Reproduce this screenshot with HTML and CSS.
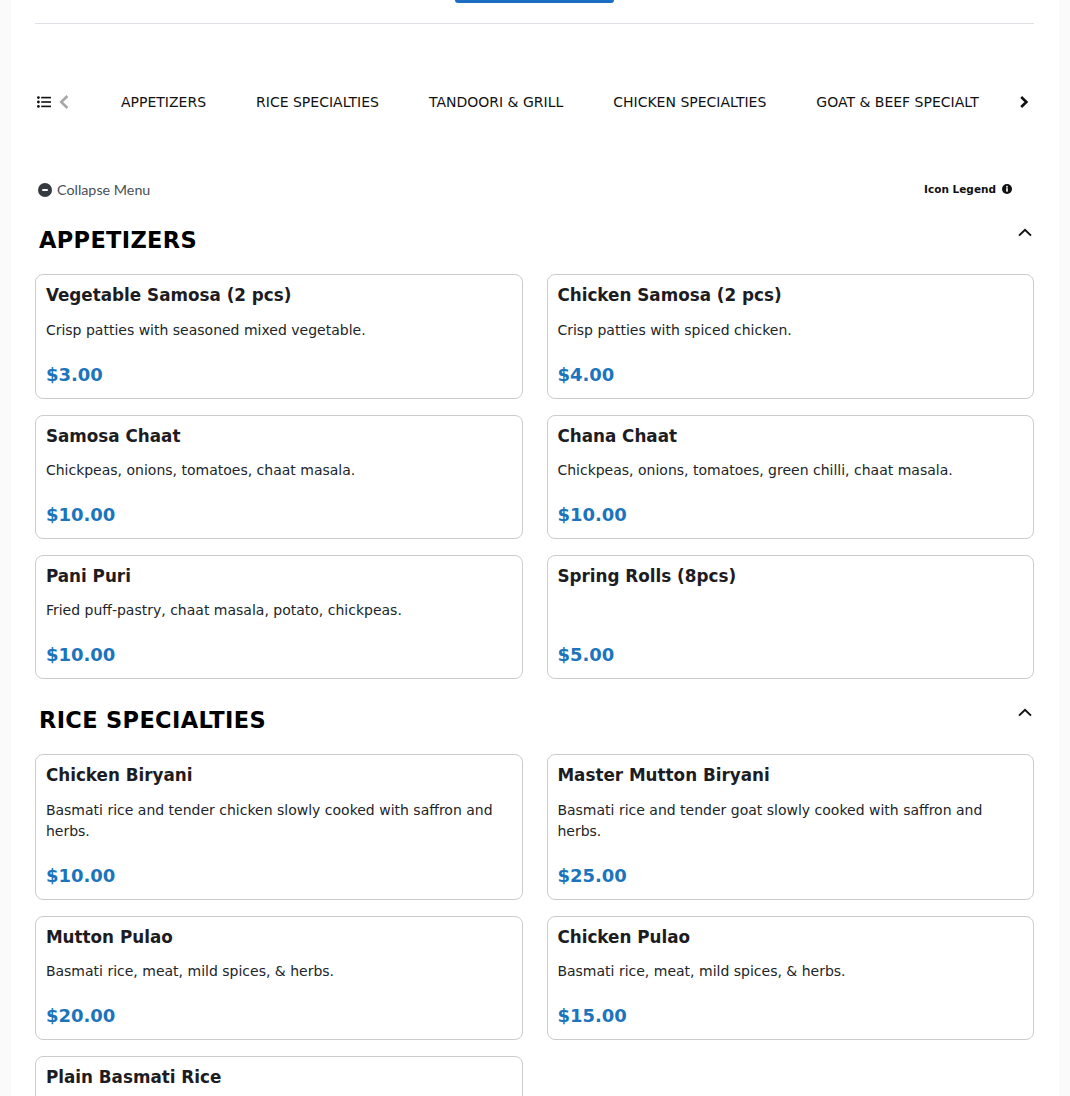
FILE: index.html
```html
<!DOCTYPE html>
<html lang="en">
<head>
<meta charset="utf-8">
<title>Menu</title>
<link rel="stylesheet" href="styles.css">
</head>
<body>
<main class="page">
  <div class="top-bar"><div class="order-button"></div></div>
  <nav class="cat-nav">
    <div class="cat-left">
      <svg class="list-icon" viewBox="0 0 14 12" width="14" height="12"><g fill="#111"><circle cx="1.4" cy="1.6" r="1.4"/><circle cx="1.4" cy="6" r="1.4"/><circle cx="1.4" cy="10.4" r="1.4"/><rect x="4.2" y="0.8" width="9.8" height="1.6"/><rect x="4.2" y="5.2" width="9.8" height="1.6"/><rect x="4.2" y="9.6" width="9.8" height="1.6"/></g></svg>
      <svg class="chev-left" viewBox="0 0 10 14" width="10" height="14"><path d="M8.4 1 2.2 7 8.4 13" fill="none" stroke="#a6a6a6" stroke-width="2.5"/></svg>
    </div>
    <div class="cat-list">
      <span class="cat">APPETIZERS</span>
      <span class="cat">RICE SPECIALTIES</span>
      <span class="cat">TANDOORI &amp; GRILL</span>
      <span class="cat">CHICKEN SPECIALTIES</span>
      <span class="cat">GOAT &amp; BEEF SPECIALT</span>
    </div>
    <svg class="chev-right" viewBox="0 0 10 14" width="10" height="14"><path d="M2.2 2 7.4 7 2.2 12" fill="none" stroke="#111" stroke-width="2.6"/></svg>
  </nav>
  <div class="tools">
    <div class="collapse">
      <svg viewBox="0 0 14 14" width="14" height="14"><circle cx="7" cy="7" r="7" fill="#343a40"/><rect x="4.2" y="6" width="5.6" height="2" rx=".6" fill="#fff"/></svg>
      <span>Collapse Menu</span>
    </div>
    <div class="legend">
      <span>Icon Legend</span>
      <svg viewBox="0 0 12 12" width="10" height="10"><circle cx="6" cy="6" r="6" fill="#111"/><rect x="5" y="5" width="2" height="4.2" fill="#fff"/><circle cx="6" cy="3.3" r="1.1" fill="#fff"/></svg>
    </div>
  </div>

  <section class="section">
    <header class="section-head">
      <h2>APPETIZERS</h2>
      <svg viewBox="0 0 14 9" width="14" height="9"><path d="M1 7.6 7 1.8l6 5.8" fill="none" stroke="#111" stroke-width="2"/></svg>
    </header>
    <div class="grid">
      <article class="card"><h3>Vegetable Samosa (2 pcs)</h3><p class="roomy">Crisp patties with seasoned mixed vegetable.</p><div class="price">$3.00</div></article>
      <article class="card"><h3>Chicken Samosa (2 pcs)</h3><p class="roomy">Crisp patties with spiced chicken.</p><div class="price">$4.00</div></article>
      <article class="card"><h3>Samosa Chaat</h3><p>Chickpeas, onions, tomatoes, chaat masala.</p><div class="price">$10.00</div></article>
      <article class="card"><h3>Chana Chaat</h3><p>Chickpeas, onions, tomatoes, green chilli, chaat masala.</p><div class="price">$10.00</div></article>
      <article class="card"><h3>Pani Puri</h3><p>Fried puff-pastry, chaat masala, potato, chickpeas.</p><div class="price">$10.00</div></article>
      <article class="card"><h3>Spring Rolls (8pcs)</h3><p></p><div class="price">$5.00</div></article>
    </div>
  </section>

  <section class="section">
    <header class="section-head">
      <h2>RICE SPECIALTIES</h2>
      <svg viewBox="0 0 14 9" width="14" height="9"><path d="M1 7.6 7 1.8l6 5.8" fill="none" stroke="#111" stroke-width="2"/></svg>
    </header>
    <div class="grid">
      <article class="card"><h3>Chicken Biryani</h3><p class="roomy">Basmati rice and tender chicken slowly cooked with saffron and herbs.</p><div class="price">$10.00</div></article>
      <article class="card"><h3>Master Mutton Biryani</h3><p class="roomy">Basmati rice and tender goat slowly cooked with saffron and herbs.</p><div class="price">$25.00</div></article>
      <article class="card"><h3>Mutton Pulao</h3><p>Basmati rice, meat, mild spices, &amp; herbs.</p><div class="price">$20.00</div></article>
      <article class="card"><h3>Chicken Pulao</h3><p>Basmati rice, meat, mild spices, &amp; herbs.</p><div class="price">$15.00</div></article>
      <article class="card"><h3>Plain Basmati Rice</h3></article>
    </div>
  </section>
</main>
</body>
</html>
```
FILE: styles.css
```css
* { box-sizing: border-box; }
html, body { margin: 0; padding: 0; height: 1096px; overflow: hidden; }
body { background: #fafafa; font-family: "DejaVu Sans", sans-serif; color: #212529; }
.page { width: 1048px; margin-left: 11px; background: #fff; padding: 0 25px 0 24px; height: 1096px; overflow: hidden; }
.top-bar { height: 24px; border-bottom: 1px solid #dee2e6; display: flex; justify-content: center; }
.order-button { width: 159px; height: 3px; background: #1b6ec2; border-radius: 0 0 4px 4px; }
.cat-nav { display: flex; align-items: center; height: 20px; margin-top: 68px; padding-left: 2px; }
.cat-left { display: flex; align-items: center; gap: 8px; width: 84px; }
.cat-list { display: flex; gap: 50px; width: 900px; overflow: hidden; white-space: nowrap; font-size: 14px; color: #111; }
.cat { flex: none; }
.chev-right { margin-left: -2px; flex: none; }
.tools { display: flex; justify-content: space-between; align-items: center; margin-top: 68px; height: 20px; padding: 0 22px 0 3px; }
.collapse { display: flex; align-items: center; gap: 5px; font-family: "Lato", sans-serif; font-size: 14.3px; color: #495057; }
.collapse span { position: relative; top: -1px; }
.legend { display: flex; align-items: center; gap: 6px; margin-bottom: 2px; font-size: 10.5px; font-weight: 700; color: #111; }
.section-head { display: flex; justify-content: space-between; align-items: flex-start; height: 51px; margin-top: 23px; padding: 0 2px 0 4px; }
.section + .section .section-head { margin-top: 24px; }
.section-head h2 { margin: 0; font-size: 22.5px; line-height: 34px; font-weight: 700; color: #000; letter-spacing: .33px; }
.section-head svg { margin-top: 5px; }
.grid { display: grid; grid-template-columns: 1fr 1fr; gap: 16px 24px; }
.card { border: 1px solid #ccc; border-radius: 8px; padding: 10px 10px 12px 9.9px; display: flex; flex-direction: column; min-height: 124px; background: #fff; }
.card h3 { margin: 0; font-size: 16.8px; line-height: 20px; font-weight: 700; color: #1c1c22; }
.card p { margin: 14px 0 0; font-size: 14px; line-height: 21px; color: #212529; flex: 1; }
.card p.roomy { margin-top: 15px; }
.price { font-size: 18px; line-height: 22px; font-weight: 700; color: #1b74bc; margin-top: 23px; }
```
